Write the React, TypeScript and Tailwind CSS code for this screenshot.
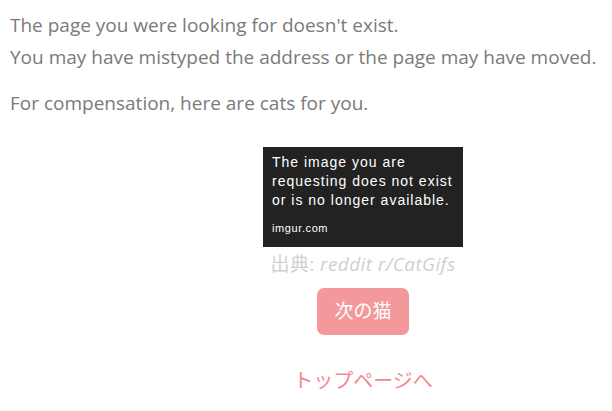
import React from 'react';

export default function App() {
  return (
    <div className="w-[612px] h-[411px] overflow-hidden bg-white" style={{ fontFamily: '"Open Sans", "Noto Sans CJK JP", sans-serif' }}>
      <div className="w-[706px] ml-[10px] pt-[9px]">
        {/* message */}
        <div className="text-[19px] leading-[32px] text-[#7a7a7a]">
          <p>The page you were looking for doesn't exist.</p>
          <p>You may have mistyped the address or the page may have moved.</p>
          <p className="mt-[14px]">For compensation, here are cats for you.</p>
        </div>

        {/* cat */}
        <div className="flex flex-col items-center mt-[28px]">
          <div
            className="w-[200px] h-[100px] bg-[#222222] text-white pl-[9px] pt-[6px] flex flex-col whitespace-nowrap"
            style={{ fontFamily: '"Liberation Sans", Arial, sans-serif' }}
          >
            <div className="text-[14px] leading-[19px] tracking-[1px]">
              <p>The image you are</p>
              <p>requesting does not exist</p>
              <p>or is no longer available.</p>
            </div>
            <p className="mt-auto mb-[11px] text-[11px] tracking-[0.6px]">imgur.com</p>
          </div>
          <p className="text-[19px] leading-[26px] text-[#d0d0d0] mt-[4px] tracking-[0.4px]">
            出典: <span className="italic">reddit r/CatGifs</span>
          </p>
          <button className="mt-[11px] w-[92px] h-[47px] rounded-[7px] bg-[#f3989b] text-white text-[19px]">
            次の猫
          </button>
          <a className="mt-[31px] text-[20px] text-[#f08a8f]">トップページへ</a>
        </div>
      </div>
    </div>
  );
}
